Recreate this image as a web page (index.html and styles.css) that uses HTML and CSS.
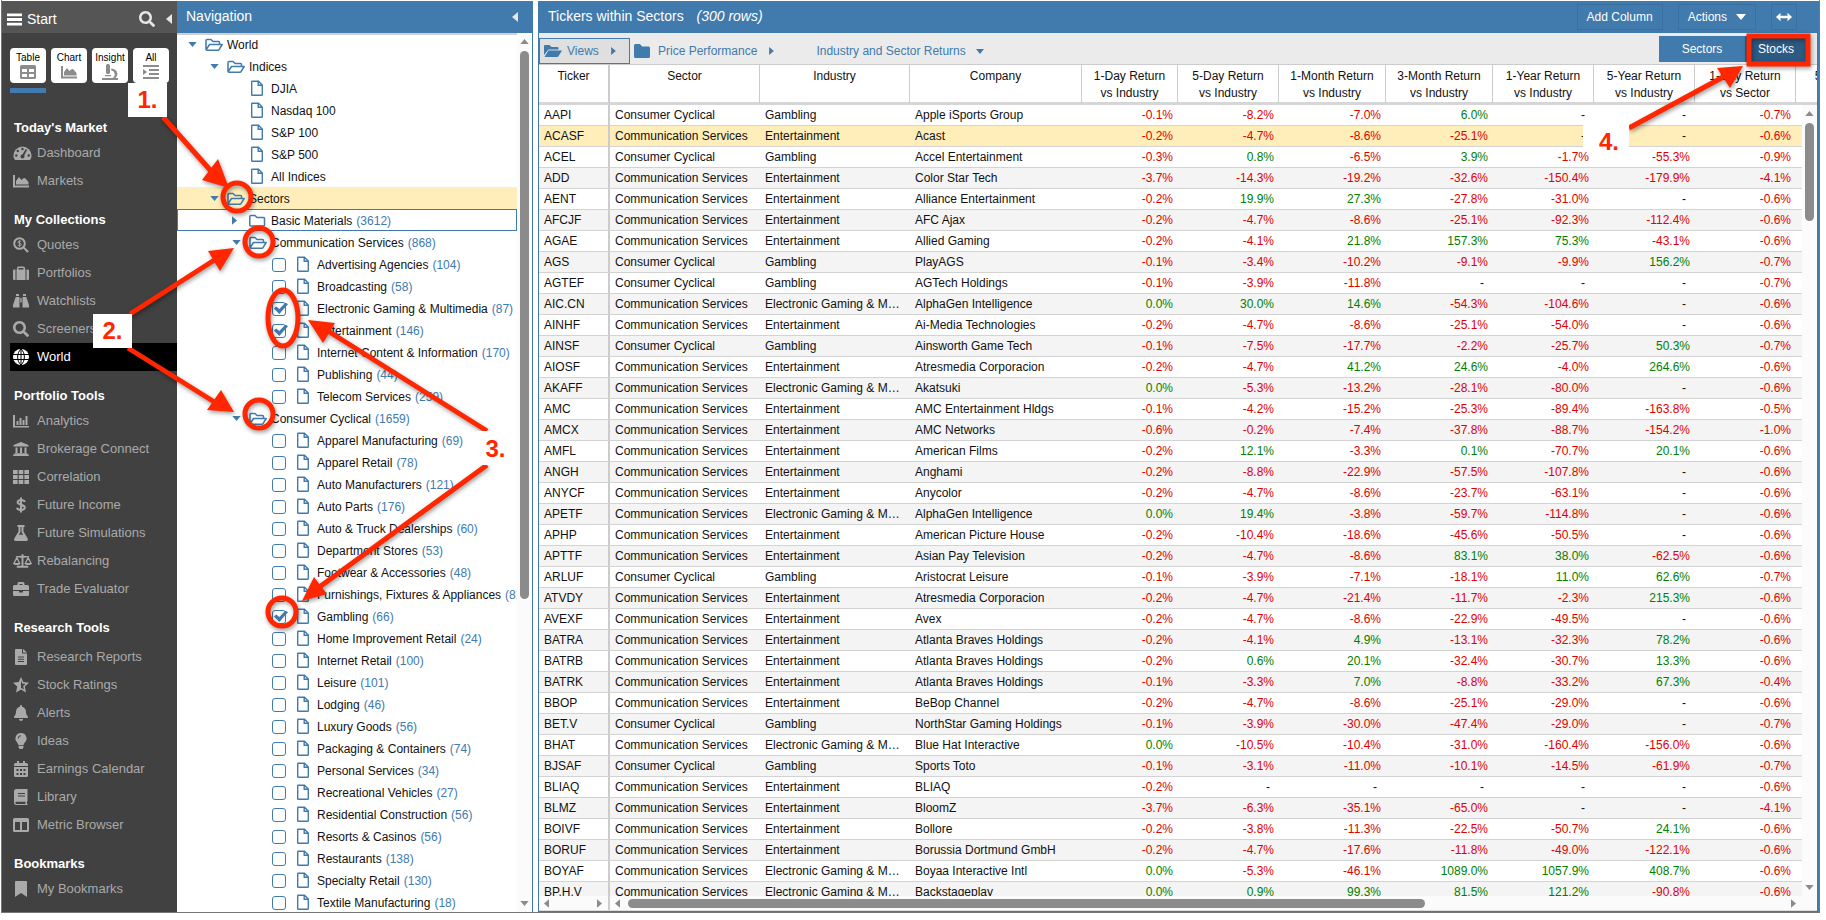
FILE: index.html
```
<!DOCTYPE html>
<html lang="en">
<head>
    <meta charset="UTF-8">
    <meta name="viewport" content="width=device-width, initial-scale=1.0">
    <title>Tickers within Sectors</title>
    <link rel="stylesheet" href="styles.css">
</head>
<body>

<!-- icon set -->
<svg class="symbols" aria-hidden="true">
    <symbol id="i-menu" viewBox="0 0 16 16"><path d="M0 1.500h16v3H0zM0 6.500h16v3H0zM0 11.500h16v3H0z"/></symbol>
    <symbol id="i-search" viewBox="0 0 512 512"><path d="M505 442.700L405.300 343c-4.500-4.500-10.600-7-17-7H372c27.600-35.300 44-79.700 44-128C416 93.100 322.900 0 208 0S0 93.100 0 208s93.100 208 208 208c48.300 0 92.700-16.400 128-44v16.300c0 6.400 2.500 12.500 7 17l99.700 99.700c9.400 9.400 24.600 9.400 33.900 0l28.300-28.300c9.400-9.400 9.400-24.600.1-34zM208 336c-70.700 0-128-57.200-128-128 0-70.700 57.200-128 128-128 70.700 0 128 57.200 128 128 0 70.700-57.200 128-128 128z"/></symbol>
    <symbol id="i-left" viewBox="0 0 6 10"><path d="M6 0v10L0 5z"/></symbol>
    <symbol id="i-right" viewBox="0 0 6 10"><path d="M0 0v10l6-5z"/></symbol>
    <symbol id="i-down" viewBox="0 0 10 6"><path d="M0 0h10L5 6z"/></symbol>
    <symbol id="i-up" viewBox="0 0 10 6"><path d="M0 6h10L5 0z"/></symbol>
    <symbol id="i-table" viewBox="0 0 16 16"><path fill-rule="evenodd" d="M1.500 1h13A1.500 1.500 0 0 1 16 2.500v11a1.500 1.500 0 0 1-1.500 1.500h-13A1.500 1.500 0 0 1 0 13.500v-11A1.500 1.500 0 0 1 1.500 1zM2 5v3h5V5zm7 0v3h5V5zM2 10v3h5v-3zm7 0v3h5v-3z"/></symbol>
    <symbol id="i-area" viewBox="0 0 16 16"><path d="M0 2h2v10.500h14v2H0zM3 11.500V8l3-4 2.500 3L10 5.500 12 5l3.500 4v2.500z"/></symbol>
    <symbol id="i-micro" viewBox="0 0 16 16"><path d="M4 1.500 5 0h2l1 1.500V9L7 10H5L4 9zM3 11h6v1.300H3zM0 14h10.500c3-1.500 3.200-7-1.200-7.600V4.500c7 .6 7.400 7 4 9.500H16v2H0z"/></symbol>
    <symbol id="i-indent" viewBox="0 0 16 16"><path d="M0 1h16v2H0zM6 5h10v2H6zM6 9h10v2H6zM0 13h16v2H0zM0 5l4 3-4 3z"/></symbol>
    <symbol id="i-gauge" viewBox="0 0 18 16"><path d="M9 1.500a9 9 0 0 0-9 9c0 1.500.4 2.900 1.100 4 .2.300.4.500.8.500h14.200c.4 0 .6-.2.800-.5a8 8 0 0 0 1.100-4 9 9 0 0 0-9-9z"/><g fill="#414141"><circle cx="9" cy="4" r="1.200"/><circle cx="4.300" cy="6" r="1.200"/><circle cx="2.800" cy="10.500" r="1.200"/><circle cx="15.200" cy="10.500" r="1.200"/><circle cx="9" cy="11.500" r="2"/><path d="m8 11 4.300-7 1.300.700L10 12z"/></g></symbol>
    <symbol id="i-quote" viewBox="0 0 16 16"><circle cx="6.500" cy="6.500" r="5.300" fill="none" stroke="currentColor" stroke-width="2"/><path d="m10 11 1.200-1.200 4.600 4.400-1.600 1.600z"/><path d="M8.300 4.800C7.500 3.900 5 3.900 5 5.300c0 1.500 3.300.8 3.300 2.300S5.500 9 4.700 8.100M6.600 3.200v6.500" fill="none" stroke="currentColor"/></symbol>
    <symbol id="i-case" viewBox="0 0 16 16"><path fill-rule="evenodd" d="M4 4.500V3a1.500 1.500 0 0 1 1.500-1.500h5A1.500 1.500 0 0 1 12 3v1.500h.5V15h-9V4.500zm1.500 0h5V3h-5zM2.500 4.500V15H1.300A1.300 1.300 0 0 1 0 13.700V5.800a1.300 1.300 0 0 1 1.300-1.300zm11 0h1.200A1.300 1.300 0 0 1 16 5.800v7.900a1.300 1.300 0 0 1-1.300 1.300h-1.200z"/></symbol>
    <symbol id="i-binoc" viewBox="0 0 16 16"><path d="M3 1h3v2H3zM10 1h3v2h-3zM2.700 4H6.500v10.500H0V12zM13.300 4H9.500v10.500H16V12zM7.300 5h1.400v4.500H7.300z"/></symbol>
    <symbol id="i-globe" viewBox="0 0 16 16"><circle cx="8" cy="8" r="8"/><path d="M0 5.500h16M0 10.500h16M8 0v16M8 0C3.500 4 3.500 12 8 16M8 0c4.500 4 4.500 12 0 16" fill="none" stroke="#000" stroke-width="1"/></symbol>
    <symbol id="i-bars" viewBox="0 0 16 16"><path d="M0 2h2v11H16v1.500H0zM3.500 8h2V12H3.500zM6.500 5h2v7H6.500zM9.500 7h2v5H9.500zM12.500 3h2v9h-2z"/></symbol>
    <symbol id="i-bank" viewBox="0 0 16 16"><path d="m8 1 7.500 3v1.500H.5V4zM2.500 6.500h2v5.500h-2zM7 6.500h2v5.500H7zM11.500 6.500h2v5.500h-2zM1.500 12.300h13v1.200h1.300V15H.2v-1.500h1.300z"/></symbol>
    <symbol id="i-grid" viewBox="0 0 16 16"><path d="M0 1h4.600v4H0zM5.700 1h4.600v4H5.700zM11.400 1H16v4h-4.600zM0 6h4.600v4H0zM5.700 6h4.600v4H5.700zM11.400 6H16v4h-4.600zM0 11h4.600v4H0zM5.700 11h4.600v4H5.700zM11.400 11H16v4h-4.600z"/></symbol>
    <symbol id="i-dollar" viewBox="0 0 16 16"><path d="M11.800 5C11 2.600 4.600 2.200 4.600 5.200c0 3.200 7.200 2 7.200 5.400 0 3.300-7.200 3-7.800.2M8 .5v15" fill="none" stroke="currentColor" stroke-width="2"/></symbol>
    <symbol id="i-flask" viewBox="0 0 16 16"><path fill-rule="evenodd" d="M4.500 0h7v2h-1v4.500l4.200 7c.6 1.200 0 2.500-1.400 2.500H2.700c-1.400 0-2-1.300-1.400-2.500l4.200-7V2h-1zm3 2v5L6 9.800h4L8.500 7V2z"/></symbol>
    <symbol id="i-scale" viewBox="0 0 20 16"><path d="M9 1h2v1.500l6 .5v1l-6 .5V13h5v2H4v-2h5V4.500L3 4V3l6-.5z"/><path d="M1 10.500 4 4.500l3 6M13 10.500l3-6 3 6" fill="none" stroke="currentColor" stroke-width="1.300"/><path d="M0 10h8c0 3-8 3-8 0zM12 10h8c0 3-8 3-8 0z"/></symbol>
    <symbol id="i-brief" viewBox="0 0 16 16"><path fill-rule="evenodd" d="M4.500 4V2.500A1.500 1.500 0 0 1 6 1h4a1.500 1.500 0 0 1 1.500 1.500V4h3A1.500 1.500 0 0 1 16 5.500V9H0V5.500A1.500 1.500 0 0 1 1.500 4zM6.500 4h3V3h-3zM0 10h6v1.500h4V10h6v3.500a1.500 1.500 0 0 1-1.500 1.500h-13A1.500 1.500 0 0 1 0 13.500z"/></symbol>
    <symbol id="i-report" viewBox="0 0 16 16"><path fill-rule="evenodd" d="M2 1a1 1 0 0 1 1-1h6v4.500h5V15a1 1 0 0 1-1 1H3a1 1 0 0 1-1-1zM10 0l4 3.500h-4zM5 7.500v1h6v-1zm0 2.300v1h6v-1zm0 2.300v1h6v-1z"/></symbol>
    <symbol id="i-star" viewBox="0 0 16 16"><path fill-rule="evenodd" d="m8 0 2.300 5 5.700.7-4.200 3.800 1.200 5.900L8 12.600l-5 2.800 1.200-5.900L0 5.700 5.700 5zm0 3.500v7.300l2.900 1.600-.8-3.500L12.600 7l-3.400-.5z"/></symbol>
    <symbol id="i-bell" viewBox="0 0 448 512"><path d="M224 512c35.320 0 63.970-28.650 63.970-64H160.030c0 35.350 28.650 64 63.970 64zm215.390-149.710c-19.320-20.760-55.470-51.990-55.470-154.290 0-77.700-54.480-139.900-127.940-155.160V32c0-17.670-14.320-32-31.980-32s-31.980 14.330-31.980 32v20.840C118.560 68.100 64.080 130.300 64.080 208c0 102.300-36.150 133.530-55.470 154.290-6 6.450-8.660 14.160-8.610 21.710.11 16.400 12.980 32 32.100 32h383.800c19.120 0 32-15.600 32.100-32 .05-7.550-2.610-15.270-8.610-21.710z"/></symbol>
    <symbol id="i-bulb" viewBox="0 0 16 16"><path d="M8 0a5.500 5.500 0 0 0-4.200 9.100c.8 1 1.400 1.900 1.700 2.900h5c.3-1 .9-1.900 1.700-2.900A5.500 5.500 0 0 0 8 0zM5.500 12.700h5v1.500L9.500 16h-3l-1-1.800z"/><path d="M5.200 5.500A2.800 2.800 0 0 1 8 2.700" fill="none" stroke="#414141"/></symbol>
    <symbol id="i-cal" viewBox="0 0 16 16"><path fill-rule="evenodd" d="M4 0h2v2h4V0h2v2h1.500A1.500 1.500 0 0 1 15 3.500V5H1V3.500A1.500 1.500 0 0 1 2.500 2H4zM1 6h14v8.500a1.500 1.500 0 0 1-1.500 1.500h-11A1.500 1.500 0 0 1 1 14.500zm2.500 2v2h2V8zm3.500 0v2h2V8zm3.500 0v2h2V8zm-7 4v2h2v-2zM7 12v2h2v-2zm3.500 0v2h2v-2z"/></symbol>
    <symbol id="i-book" viewBox="0 0 16 16"><path fill-rule="evenodd" d="M3.500 0h11v12l-.5.500V15h.5v1h-11A2.500 2.500 0 0 1 1 13.500v-11A2.500 2.500 0 0 1 3.500 0zM5 4v1h7V4zm0 2.500v1h7v-1zM3.500 12.700a1.100 1.100 0 0 0 0 2.300h9v-2.300z"/></symbol>
    <symbol id="i-cols" viewBox="0 0 16 16"><path fill-rule="evenodd" d="M1.500 1h13A1.500 1.500 0 0 1 16 2.500v11a1.500 1.500 0 0 1-1.500 1.500h-13A1.500 1.500 0 0 1 0 13.500v-11A1.500 1.500 0 0 1 1.500 1zM2 5v8h5V5zm7 0v8h5V5z"/></symbol>
    <symbol id="i-mark" viewBox="0 0 16 16"><path d="M2 1a1 1 0 0 1 1-1h10a1 1 0 0 1 1 1v15l-6-4-6 4z"/></symbol>
    <symbol id="i-open" viewBox="0 0 18 18"><path d="M1 13.500V4.500Q1 3.500 2 3.500H6L8 5.500H13.500Q14.500 5.500 14.500 6.500V8.500M1.200 13.700 4.500 8.500H17.200L14 13.700Q13.700 14.300 13 14.300H2Q1 14.300 1 13.300" fill="none" stroke="currentColor" stroke-width="1.500" stroke-linejoin="round"/></symbol>
    <symbol id="i-closed" viewBox="0 0 18 18"><path d="M.8 4.500Q.8 3.500 1.800 3.500H6L8 5.500H14.500Q15.500 5.500 15.500 6.500V13Q15.500 14 14.500 14H1.800Q.8 14 .8 13z" fill="none" stroke="currentColor" stroke-width="1.500"/></symbol>
    <symbol id="i-file" viewBox="0 0 18 18"><path d="M3.200 1.200H9.500L13.300 5V14.500Q13.300 15.300 12.500 15.300H3.200Q2.700 15.300 2.700 14.800V1.700Q2.700 1.200 3.200 1.200zM9.200 1.200V5.300H13.300" fill="none" stroke="currentColor" stroke-width="1.400"/></symbol>
    <symbol id="i-fopen" viewBox="0 0 18 14"><path d="M0 11V2Q0 1 1 1H5.500L7.500 3H13.500Q14.500 3 14.500 4V5.500H4.500zM.5 13 4.500 6.500H18L14.500 12.300Q14 13 13.300 13z"/></symbol>
    <symbol id="i-fclosed" viewBox="0 0 16 14"><path d="M0 1.500Q0 0 1.500 0H6L8 2.500H14.500Q16 2.500 16 4V12.500Q16 14 14.500 14H1.500Q0 14 0 12.500z"/></symbol>
    <symbol id="i-resize" viewBox="0 0 16 10"><path d="M0 5l4.500-4.200V3.700h7V.8L16 5l-4.500 4.200V6.300h-7v2.900z"/></symbol>
</svg>

<div class="app">
    <aside class="sidebar">
        <div class="bar sidebar-bar">
            <button type="button" class="start"><svg><use href="#i-menu"/></svg>Start</button>
            <button type="button" class="find" aria-label="Search"><svg><use href="#i-search"/></svg></button>
            <button type="button" class="collapse" aria-label="Collapse menu"><svg><use href="#i-left"/></svg></button>
        </div>
        <div class="modes">
            <button type="button" class="active">Table<svg><use href="#i-table"/></svg></button>
            <button type="button">Chart<svg><use href="#i-area"/></svg></button>
            <button type="button">Insight<svg><use href="#i-micro"/></svg></button>
            <button type="button">All<svg><use href="#i-indent"/></svg></button>
        </div>
        <nav id="menu" class="menu"></nav>
    </aside>

    <section class="navigation">
        <div class="bar blue">
            <h2>Navigation</h2>
            <button type="button" class="collapse" aria-label="Collapse navigation"><svg><use href="#i-left"/></svg></button>
        </div>
        <div class="tree-wrap">
            <ul id="tree" class="tree"></ul>
            <div class="scroll-y">
                <svg><use href="#i-up"/></svg>
                <div class="track"><div class="thumb tree-thumb"></div></div>
                <svg><use href="#i-down"/></svg>
            </div>
        </div>
    </section>

    <main class="content">
        <div class="bar blue">
            <h1>Tickers within Sectors <em>(300 rows)</em></h1>
            <button type="button" class="tool">Add Column</button>
            <button type="button" class="tool">Actions <svg class="caret"><use href="#i-down"/></svg></button>
            <button type="button" class="tool resize" aria-label="Resize"><svg><use href="#i-resize"/></svg></button>
        </div>
        <div class="toolbar">
            <button type="button" class="crumb views"><svg class="folder"><use href="#i-fopen"/></svg>Views<svg class="arrow"><use href="#i-right"/></svg></button>
            <button type="button" class="crumb"><svg class="folder closed"><use href="#i-fclosed"/></svg>Price Performance<svg class="arrow"><use href="#i-right"/></svg></button>
            <button type="button" class="crumb last">Industry and Sector Returns<svg class="arrow down"><use href="#i-down"/></svg></button>
            <div class="switch">
                <button type="button">Sectors</button>
                <button type="button" class="on">Stocks</button>
            </div>
        </div>
        <div class="grid">
            <table>
                <colgroup>
                    <col class="c-ticker"><col class="c-name"><col class="c-name"><col class="c-company">
                    <col class="c-day"><col class="c-year"><col class="c-month"><col class="c-month">
                    <col class="c-year"><col class="c-year"><col class="c-year"><col class="c-last">
                </colgroup>
                <thead>
                    <tr>
                        <th>Ticker</th><th>Sector</th><th>Industry</th><th>Company</th>
                        <th>1-Day Return<br>vs Industry</th><th>5-Day Return<br>vs Industry</th>
                        <th>1-Month Return<br>vs Industry</th><th>3-Month Return<br>vs Industry</th>
                        <th>1-Year Return<br>vs Industry</th><th>5-Year Return<br>vs Industry</th>
                        <th>1-Day Return<br>vs Sector</th><th>5-Day Return<br>vs Sector</th>
                    </tr>
                </thead>
                <tbody id="rows"></tbody>
            </table>
            <div class="scroll-y grid-scroll">
                <svg><use href="#i-up"/></svg>
                <div class="track"><div class="thumb grid-thumb"></div></div>
                <svg><use href="#i-down"/></svg>
            </div>
        </div>
        <div class="scroll-x">
            <div class="scroll-fixed">
                <svg><use href="#i-left"/></svg>
                <svg><use href="#i-right"/></svg>
            </div>
            <div class="scroll-main">
                <svg><use href="#i-left"/></svg>
                <div class="track"><div class="thumb"></div></div>
                <svg><use href="#i-right"/></svg>
            </div>
        </div>
    </main>
</div>

<!-- tutorial callouts drawn over the screen -->
<svg class="marks" aria-hidden="true">
    <g class="lines">
        <path d="M163 117 211 171M130 314 216 259M128 348 216 403M487 431 328 331M487 465 318 588M1629 128 1725 76"/>
        <circle cx="237" cy="197" r="14"/>
        <circle cx="259" cy="242" r="14"/>
        <circle cx="259" cy="414" r="14"/>
        <ellipse cx="283" cy="318" rx="15" ry="28"/>
        <circle cx="282" cy="612" r="14"/>
    </g>
    <rect class="frame" x="1749" y="36" width="59" height="28"/>
    <path class="heads" d="M229 188 218 159 202 180zM234 248 208 251 220 271zM234 412 221 390 207 410zM308 320 335 323 323 343zM302 601 314 577 327 594zM1743 66 1717 68 1730 88z"/>
</svg>
<div class="callout one">1.</div>
<div class="callout two">2.</div>
<div class="callout three">3.</div>
<div class="callout four">4.</div>

<script>
    const icon = (name) => `<svg><use href="#i-${name}"/></svg>`;

    const menu = [
        ["Today's Market", ['gauge Dashboard', 'area Markets']],
        ['My Collections', ['quote Quotes', 'case Portfolios', 'binoc Watchlists', 'search Screeners', 'globe World']],
        ['Portfolio Tools', ['bars Analytics', 'bank Brokerage Connect', 'grid Correlation', 'dollar Future Income', 'flask Future Simulations', 'scale Rebalancing', 'brief Trade Evaluator']],
        ['Research Tools', ['report Research Reports', 'star Stock Ratings', 'bell Alerts', 'bulb Ideas', 'cal Earnings Calendar', 'book Library', 'cols Metric Browser']],
        ['Bookmarks', ['mark My Bookmarks']],
    ];

    document.getElementById('menu').innerHTML = menu.map(([title, items]) => `
        <h3${title === 'Research Tools' ? ' class="spaced"' : ''}>${title}</h3>
        ${items.map(item => {
            const name = item.split(' ')[0];
            const text = item.slice(name.length + 1);
            return `<a href="#"${text === 'World' ? ' class="current"' : ''}><span>${icon(name)}</span>${text}</a>`;
        }).join('')}
    `).join('');

    // level | type | name | count
    const tree = `0|open|World
1|open|Indices
2|file|DJIA
2|file|Nasdaq 100
2|file|S&amp;P 100
2|file|S&amp;P 500
2|file|All Indices
1|open|Sectors
2|closed|Basic Materials|3612
2|open|Communication Services|868
3|file|Advertising Agencies|104
3|file|Broadcasting|58
3|file|Electronic Gaming &amp; Multimedia|87
3|file|Entertainment|146
3|file|Internet Content &amp; Information|170
3|file|Publishing|44
3|file|Telecom Services|259
2|open|Consumer Cyclical|1659
3|file|Apparel Manufacturing|69
3|file|Apparel Retail|78
3|file|Auto Manufacturers|121
3|file|Auto Parts|176
3|file|Auto &amp; Truck Dealerships|60
3|file|Department Stores|53
3|file|Footwear &amp; Accessories|48
3|file|Furnishings, Fixtures &amp; Appliances|81
3|file|Gambling|66
3|file|Home Improvement Retail|24
3|file|Internet Retail|100
3|file|Leisure|101
3|file|Lodging|46
3|file|Luxury Goods|56
3|file|Packaging &amp; Containers|74
3|file|Personal Services|34
3|file|Recreational Vehicles|27
3|file|Residential Construction|56
3|file|Resorts &amp; Casinos|56
3|file|Restaurants|138
3|file|Specialty Retail|130
3|file|Textile Manufacturing|18`;

    const checked = ['Electronic Gaming &amp; Multimedia', 'Entertainment', 'Gambling'];
    const rowClass = { 'Sectors': ' selected', 'Basic Materials': ' focused' };

    document.getElementById('tree').innerHTML = tree.split('\n').map(line => {
        const [level, type, name, count] = line.split('|');
        const toggle = { open: icon('down'), closed: icon('right'), file: '' }[type];
        const box = level === '3' ? `<input type="checkbox"${checked.includes(name) ? ' checked' : ''}>` : '';
        const tag = box ? 'label' : 'div';
        return `<li class="level-${level}${rowClass[name] || ''}"><${tag}><span class="toggle ${type}">${toggle}</span>${box}<span class="icon">${icon(type)}</span>${name}${count ? `<span class="count">(${count})</span>` : ''}</${tag}></li>`;
    }).join('');

    const sectors = { G: 'Consumer Cyclical', E: 'Communication Services', M: 'Communication Services' };
    const industries = { G: 'Gambling', E: 'Entertainment', M: 'Electronic Gaming &amp; Multimedia' };

    const tickers = `AAPI|G|Apple iSports Group|-0.1 -8.2 -7.0 6.0 - - -0.7
ACASF|E|Acast|-0.2 -4.7 -8.6 -25.1 - - -0.6
ACEL|G|Accel Entertainment|-0.3 0.8 -6.5 3.9 -1.7 -55.3 -0.9
ADD|E|Color Star Tech|-3.7 -14.3 -19.2 -32.6 -150.4 -179.9 -4.1
AENT|E|Alliance Entertainment|-0.2 19.9 27.3 -27.8 -31.0 - -0.6
AFCJF|E|AFC Ajax|-0.2 -4.7 -8.6 -25.1 -92.3 -112.4 -0.6
AGAE|E|Allied Gaming|-0.2 -4.1 21.8 157.3 75.3 -43.1 -0.6
AGS|G|PlayAGS|-0.1 -3.4 -10.2 -9.1 -9.9 156.2 -0.7
AGTEF|G|AGTech Holdings|-0.1 -3.9 -11.8 - - - -0.7
AIC.CN|M|AlphaGen Intelligence|0.0 30.0 14.6 -54.3 -104.6 - -0.6
AINHF|E|Ai-Media Technologies|-0.2 -4.7 -8.6 -25.1 -54.0 - -0.6
AINSF|G|Ainsworth Game Tech|-0.1 -7.5 -17.7 -2.2 -25.7 50.3 -0.7
AIOSF|E|Atresmedia Corporacion|-0.2 -4.7 41.2 24.6 -4.0 264.6 -0.6
AKAFF|M|Akatsuki|0.0 -5.3 -13.2 -28.1 -80.0 - -0.6
AMC|E|AMC Entertainment Hldgs|-0.1 -4.2 -15.2 -25.3 -89.4 -163.8 -0.5
AMCX|E|AMC Networks|-0.6 -0.2 -7.4 -37.8 -88.7 -154.2 -1.0
AMFL|E|American Films|-0.2 12.1 -3.3 0.1 -70.7 20.1 -0.6
ANGH|E|Anghami|-0.2 -8.8 -22.9 -57.5 -107.8 - -0.6
ANYCF|E|Anycolor|-0.2 -4.7 -8.6 -23.7 -63.1 - -0.6
APETF|M|AlphaGen Intelligence|0.0 19.4 -3.8 -59.7 -114.8 - -0.6
APHP|E|American Picture House|-0.2 -10.4 -18.6 -45.6 -50.5 - -0.6
APTTF|E|Asian Pay Television|-0.2 -4.7 -8.6 83.1 38.0 -62.5 -0.6
ARLUF|G|Aristocrat Leisure|-0.1 -3.9 -7.1 -18.1 11.0 62.6 -0.7
ATVDY|E|Atresmedia Corporacion|-0.2 -4.7 -21.4 -11.7 -2.3 215.3 -0.6
AVEXF|E|Avex|-0.2 -4.7 -8.6 -22.9 -49.5 - -0.6
BATRA|E|Atlanta Braves Holdings|-0.2 -4.1 4.9 -13.1 -32.3 78.2 -0.6
BATRB|E|Atlanta Braves Holdings|-0.2 0.6 20.1 -32.4 -30.7 13.3 -0.6
BATRK|E|Atlanta Braves Holdings|-0.1 -3.3 7.0 -8.8 -33.2 67.3 -0.4
BBOP|E|BeBop Channel|-0.2 -4.7 -8.6 -25.1 -29.0 - -0.6
BET.V|G|NorthStar Gaming Holdings|-0.1 -3.9 -30.0 -47.4 -29.0 - -0.7
BHAT|M|Blue Hat Interactive|0.0 -10.5 -10.4 -31.0 -160.4 -156.0 -0.6
BJSAF|G|Sports Toto|-0.1 -3.1 -11.0 -10.1 -14.5 -61.9 -0.7
BLIAQ|E|BLIAQ|-0.2 - - - - - -0.6
BLMZ|E|BloomZ|-3.7 -6.3 -35.1 -65.0 - - -4.1
BOIVF|E|Bollore|-0.2 -3.8 -11.3 -22.5 -50.7 24.1 -0.6
BORUF|E|Borussia Dortmund GmbH|-0.2 -4.7 -17.6 -11.8 -49.0 -122.1 -0.6
BOYAF|M|Boyaa Interactive Intl|0.0 -5.3 -46.1 1089.0 1057.9 408.7 -0.6
BP.H.V|M|Backstageplay|0.0 0.9 99.3 81.5 121.2 -90.8 -0.6`;

    function cell(value) {
        if (value === '-') {
            return '<td class="num none">-</td>';
        }
        return `<td class="num ${value.startsWith('-') ? 'down' : 'up'}">${value}%</td>`;
    }

    document.getElementById('rows').innerHTML = tickers.split('\n').map(line => {
        const [ticker, kind, company, values] = line.split('|');
        return `<tr${ticker === 'ACASF' ? ' class="selected"' : ''}><td>${ticker}</td><td>${sectors[kind]}</td><td>${industries[kind]}</td><td>${company}</td>${values.split(' ').map(cell).join('')}<td></td></tr>`;
    }).join('');
</script>

</body>
</html>
```
FILE: styles.css
```
* {
    box-sizing: border-box;
}

body {
    font-family: Arial, "Liberation Sans", sans-serif;
    font-size: 12px;
    color: #111;
    background: #fff;
    margin: 0;
    height: 100vh;
    overflow: hidden;
    position: relative;
}

button {
    font: inherit;
    color: inherit;
    background: none;
    border: none;
    padding: 0;
    cursor: pointer;
}

svg {
    display: block;
    fill: currentColor;
    flex: none;
}

.symbols {
    position: absolute;
    width: 0;
    height: 0;
}

.app {
    display: flex;
    height: calc(100vh - 7px);
    margin: 0 6px 0 1px;
    padding-top: 1px;
    border: 1px solid #777;
    border-top: none;
}

.bar {
    display: flex;
    align-items: center;
    height: 32px;
    color: #fff;
    font-size: 14px;
    flex: none;
}

.bar h1,
.bar h2 {
    font-size: 14px;
    font-weight: normal;
    margin: 0;
    flex: 1;
    padding-bottom: 2px;
}

.blue {
    background: #417aad;
}

.collapse svg {
    width: 6px;
    height: 10px;
    color: #e6e6e6;
}

/* left menu */
.sidebar {
    width: 175px;
    flex: none;
    background: #414141;
    color: #aaa;
    font-size: 13px;
    overflow: hidden;
}

.sidebar-bar {
    background: #555;
    padding: 4px 5px 0 5px;
}

.start {
    display: flex;
    align-items: center;
    gap: 5px;
    flex: 1;
}

.start svg {
    width: 15px;
    height: 15px;
}

.find {
    margin-right: 11px;
    color: #e6e6e6;
}

.find svg {
    width: 16px;
    height: 16px;
}

.modes {
    display: flex;
    gap: 5px;
    padding: 15px 8px 0;
}

.modes button {
    display: flex;
    flex-direction: column;
    align-items: center;
    justify-content: center;
    width: 36px;
    height: 35px;
    background: #fff;
    color: #000;
    border-radius: 4px;
    font-size: 10px;
    line-height: 12px;
    position: relative;
}

.modes svg {
    width: 16px;
    height: 16px;
    color: #8c8c8c;
}

.modes .active::after {
    content: "";
    position: absolute;
    left: 0;
    top: 40px;
    width: 36px;
    height: 5px;
    background: #417aad;
}

.menu {
    padding-top: 20px;
}

.menu h3 {
    color: #fff;
    font-size: 13px;
    line-height: 22px;
    margin: 14px 0 0;
    padding-left: 12px;
}

.menu .spaced {
    margin-bottom: 4px;
}

.menu a {
    display: flex;
    align-items: center;
    height: 28px;
    margin-left: 8px;
    padding: 0 0 2px 3px;
    color: #aaa;
    text-decoration: none;
}

.menu a span {
    display: flex;
    width: 24px;
    padding-top: 2px;
}

.menu svg {
    width: 16px;
    height: 16px;
}

.menu a:nth-of-type(1) svg,
.menu a:nth-of-type(13) svg {
    width: 19px;
}

.menu .current {
    background: #000;
    color: #fff;
}

/* navigation tree */
.navigation {
    display: flex;
    flex-direction: column;
    width: 356px;
    flex: none;
    border-right: 1px solid #417aad;
}

.navigation .bar {
    padding: 0 14px 0 9px;
}

.tree-wrap {
    display: flex;
    flex: 1;
    min-height: 0;
}

.tree {
    flex: 1;
    min-width: 0;
    margin: 0;
    padding: 0;
    list-style: none;
    overflow: hidden;
    box-shadow: inset 0 2px #d0d0d0;
}

.tree li {
    height: 22px;
    white-space: nowrap;
    overflow: hidden;
}

.tree li > * {
    display: flex;
    align-items: center;
    height: 100%;
    padding-top: 1px;
}

.level-0 { padding-left: 11px; }
.level-1 { padding-left: 33px; }
.level-2 { padding-left: 55px; }
.level-3 { padding-left: 77px; }

.tree .selected {
    background: #ffeeba;
}

.tree .focused {
    box-shadow: inset 0 0 0 1px #417aad;
}

.toggle {
    width: 17px;
    flex: none;
    color: #417aad;
}

.toggle.open svg {
    width: 9px;
    height: 5px;
}

.toggle.closed svg {
    width: 5px;
    height: 9px;
}

.tree input {
    appearance: none;
    width: 14px;
    height: 14px;
    margin: 0 9px 0 1px;
    flex: none;
    border: 1px solid #417aad;
    border-radius: 3px;
    background: #fff;
}

.tree input:checked::before {
    content: "";
    display: block;
    width: 15px;
    height: 12px;
    background: #417aad;
    clip-path: polygon(6% 50%, 22% 34%, 42% 55%, 84% 0, 100% 14%, 42% 96%);
}

.icon {
    color: #417aad;
    margin-right: 4px;
}

.icon svg {
    width: 18px;
    height: 18px;
}

.count {
    color: #417aad;
    margin-left: 4px;
}

/* scrollbars */
.scroll-y {
    display: flex;
    flex-direction: column;
    align-items: center;
    width: 15px;
    flex: none;
    padding: 6px 0 6px;
    gap: 7px;
    background: #fbfbfb;
    color: #8b8b8b;
}

.scroll-y > svg {
    width: 9px;
    height: 5px;
}

.track {
    flex: 1;
}

.thumb {
    width: 9px;
    height: 100%;
    border-radius: 5px;
    background: #8b8b8b;
}

.tree-thumb {
    height: 65%;
}

.grid-thumb {
    height: 13%;
}

.scroll-x {
    display: flex;
    height: 15px;
    flex: none;
    color: #8b8b8b;
    background: #fbfbfb;
    border-bottom: 1px solid #ddd;
}

.scroll-x svg {
    width: 5px;
    height: 9px;
}

.scroll-fixed {
    display: flex;
    align-items: center;
    justify-content: space-between;
    width: 71px;
    padding: 0 6px 0 5px;
    border-right: 2px solid #ccc;
}

.scroll-main {
    display: flex;
    align-items: center;
    flex: 1;
    gap: 8px;
    padding: 0 21px 0 5px;
}

.scroll-main .thumb {
    width: 69%;
    height: 9px;
}

/* ticker grid */
.content {
    display: flex;
    flex-direction: column;
    flex: 1;
    min-width: 0;
    margin-left: 5px;
    border: 2px solid #417aad;
    border-width: 0 2px 1px 1px;
}

.content .bar {
    gap: 15px;
    padding: 0 20px 0 9px;
}

.content em {
    margin-left: 9px;
}

.tool {
    display: flex;
    align-items: center;
    gap: 9px;
    height: 26px;
    padding: 0 9px;
    border: 1px solid #3a70a0;
    font-size: 12px;
}

.tool .caret {
    width: 10px;
    height: 6px;
}

.resize {
    padding: 0 4px;
}

.resize svg {
    width: 16px;
    height: 10px;
}

.toolbar {
    display: flex;
    align-items: flex-end;
    height: 32px;
    flex: none;
    background: #ebebeb;
    border-bottom: 1px solid #ccc;
    color: #417aad;
}

.crumb {
    display: flex;
    align-items: center;
    height: 26px;
    padding: 0 4px;
}

.views {
    width: 91px;
    background: #dfdfdf;
    border: 1px solid #417aad;
}

.folder {
    width: 18px;
    height: 14px;
    margin-right: 5px;
}

.closed.folder {
    width: 16px;
    height: 14px;
    margin-right: 8px;
}

.arrow {
    width: 5px;
    height: 8px;
    margin-left: 12px;
}

.arrow.down {
    width: 8px;
    height: 5px;
    margin-left: 10px;
}

.crumb.last {
    margin-left: 34px;
}

.switch {
    display: flex;
    margin: 0 10px 2px auto;
    color: #fff;
}

.switch button {
    width: 62px;
    height: 26px;
    background: #2c5a82;
}

.switch button:first-child {
    width: 86px;
    background: #417aad;
}

.grid {
    flex: 1;
    min-height: 0;
    overflow: hidden;
    position: relative;
}

.grid-scroll {
    position: absolute;
    top: 40px;
    right: 0;
    bottom: 0;
}

table {
    table-layout: fixed;
    width: 1367px;
    border-collapse: separate;
    border-spacing: 0;
}

.c-ticker { width: 71px; }
.c-name { width: 150px; }
.c-company { width: 172px; }
.c-day { width: 96px; }
.c-year { width: 101px; }
.c-month { width: 107px; }
.c-last { width: 110px; }

th {
    height: 40px;
    padding: 3px 0 0;
    font-weight: normal;
    line-height: 17px;
    vertical-align: top;
    border-right: 1px solid #ccc;
    border-bottom: 3px solid #d6d6d6;
}

td {
    height: 21px;
    padding: 0 5px;
    line-height: 20px;
    white-space: nowrap;
    overflow: hidden;
    text-overflow: ellipsis;
    border-bottom: 1px solid #d3d3d3;
}

td:nth-child(3) {
    padding-right: 10px;
}

th:first-child,
td:first-child {
    border-right: 2px solid #ccc;
}

tbody tr:nth-child(even) {
    background: #f4f4f4;
}

tbody .selected:nth-child(even) {
    background: #ffeeba;
}

.num {
    text-align: right;
}

.none {
    padding-right: 9px;
}

.up {
    color: #008000;
}

td.down {
    color: #e00000;
}

/* callouts */
.marks {
    position: absolute;
    left: 0;
    top: 0;
    width: 1826px;
    height: 920px;
    pointer-events: none;
    filter: drop-shadow(1px 2px 2px rgba(0, 0, 0, 0.4));
}

.lines {
    fill: none;
    stroke: #ff2600;
    stroke-width: 5px;
}

.frame {
    fill: none;
    stroke: #ff2600;
    stroke-width: 5px;
}

.heads {
    fill: #ff2600;
}

.callout {
    position: absolute;
    width: 39px;
    height: 34px;
    background: #fff;
    color: #ff2600;
    font-size: 24px;
    font-weight: bold;
    line-height: 34px;
    text-align: center;
}

.one {
    left: 128px;
    top: 83px;
}

.two {
    left: 93px;
    top: 314px;
}

.three {
    left: 476px;
    top: 431px;
    line-height: 36px;
}

.four {
    left: 1583px;
    top: 125px;
    width: 46px;
    height: 27px;
    padding-left: 6px;
}
```
